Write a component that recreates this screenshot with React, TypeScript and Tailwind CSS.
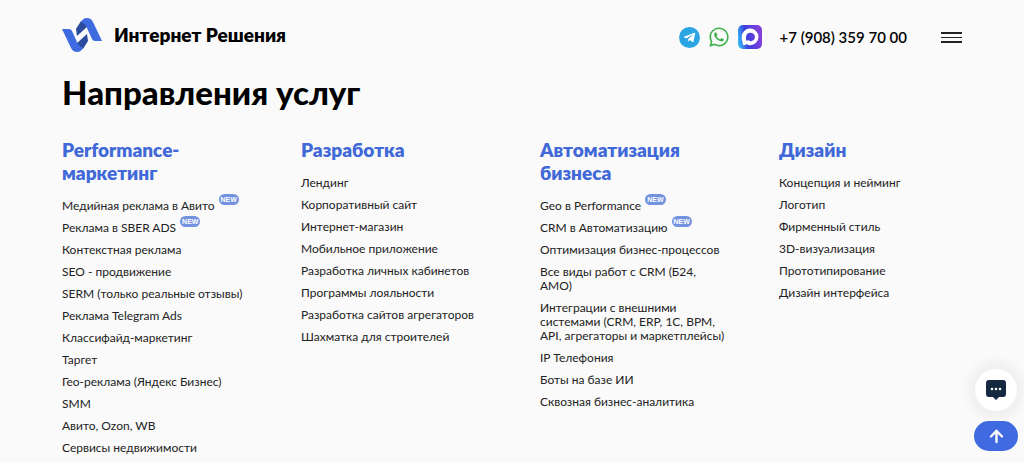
import { FaTelegramPlane, FaWhatsapp } from "react-icons/fa";
import { ArrowUp } from "lucide-react";

type Service = { name: string; isNew?: boolean };
type Column = { title: string; items: Service[] };

const columns: Column[] = [
  {
    title: "Performance-маркетинг",
    items: [
      { name: "Медийная реклама в Авито", isNew: true },
      { name: "Реклама в SBER ADS", isNew: true },
      { name: "Контекстная реклама" },
      { name: "SEO - продвижение" },
      { name: "SERM (только реальные отзывы)" },
      { name: "Реклама Telegram Ads" },
      { name: "Классифайд-маркетинг" },
      { name: "Таргет" },
      { name: "Гео-реклама (Яндекс Бизнес)" },
      { name: "SMM" },
      { name: "Авито, Ozon, WB" },
      { name: "Сервисы недвижимости" },
    ],
  },
  {
    title: "Разработка",
    items: [
      { name: "Лендинг" },
      { name: "Корпоративный сайт" },
      { name: "Интернет-магазин" },
      { name: "Мобильное приложение" },
      { name: "Разработка личных кабинетов" },
      { name: "Программы лояльности" },
      { name: "Разработка сайтов агрегаторов" },
      { name: "Шахматка для строителей" },
    ],
  },
  {
    title: "Автоматизация бизнеса",
    items: [
      { name: "Geo в Performance", isNew: true },
      { name: "CRM в Автоматизацию", isNew: true },
      { name: "Оптимизация бизнес-процессов" },
      { name: "Все виды работ с CRM (Б24, АМО)" },
      { name: "Интеграции с внешними системами (CRM, ERP, 1С, BPM, API, агрегаторы и маркетплейсы)" },
      { name: "IP Телефония" },
      { name: "Боты на базе ИИ" },
      { name: "Сквозная бизнес-аналитика" },
    ],
  },
  {
    title: "Дизайн",
    items: [
      { name: "Концепция и нейминг" },
      { name: "Логотип" },
      { name: "Фирменный стиль" },
      { name: "3D-визуализация" },
      { name: "Прототипирование" },
      { name: "Дизайн интерфейса" },
    ],
  },
];

function Logo() {
  return (
    <svg viewBox="0 0 40 34" className="h-[34px] w-10" aria-hidden="true">
      <path d="M14 11 L19 3 L26 8 L15 18 Z" fill="#2b4b9e" />
      <path d="M26 23 L21 31 L14 26 L25 16 Z" fill="#2b4b9e" />
      <path d="M0 11 H7 Q9 11 10 13 L15 24 Q17 29 21 30 Q19 34 15 34 Q11 34 9 30 Z" fill="#3f6be0" />
      <path d="M40 23 H33 Q31 23 30 21 L25 10 Q23 5 19 4 Q21 0 25 0 Q29 0 31 4 Z" fill="#3f6be0" />
    </svg>
  );
}

function MaxIcon() {
  return (
    <svg viewBox="0 0 24 24" className="size-6" aria-hidden="true">
      <defs>
        <linearGradient id="max-bg" x1="0" y1="0.6" x2="1" y2="0.4">
          <stop offset="0" stopColor="#35b8f5" />
          <stop offset="0.35" stopColor="#3a3fe0" />
          <stop offset="1" stopColor="#8a3fd8" />
        </linearGradient>
      </defs>
      <rect width="24" height="24" rx="5" fill="url(#max-bg)" />
      <path
        fill="#fff"
        fillRule="evenodd"
        d="M12.2 3.6a8.3 8.3 0 1 1 0 16.6c-1.500 0-2.400-.3-3.700-1.200-.8 1-3.500 1.800-3.600.5 0-1-.2-1.800-.5-2.700C4 15.500 3.700 14 3.700 12a8.400 8.400 0 0 1 8.500-8.400Zm.1 4.200a4.200 4.200 0 0 0-4.200 3.700c-.3 1.600.1 4.300.6 4.400.3.100.9-.4 1.300-.8a4.200 4.200 0 1 0 2.300-7.300Z"
      />
    </svg>
  );
}

function ServiceColumn({ title, items }: Column) {
  return (
    <section className="pr-[52px]">
      <h2 className="text-[19px] leading-[23px] font-extrabold text-[#4068d8]">{title}</h2>
      <ul className="mt-[15px] flex flex-col gap-2">
        {items.map((item) => (
          <li key={item.name} className="text-[12px] leading-[14px] text-[#222]">
            <a href="#">{item.name}</a>
            {item.isNew && (
              <sup className="top-0 ml-1 inline-block -translate-y-[5px] rounded-full bg-[#7393e0] px-[2px] align-top font-['Liberation_Sans',sans-serif] text-[7px] leading-[11px] font-bold text-white">
                NEW
              </sup>
            )}
          </li>
        ))}
      </ul>
    </section>
  );
}

export default function App() {
  return (
    <div className="min-h-screen bg-[#fafafa] font-['Lato','Noto_Sans',sans-serif]">
      <header className="flex items-center justify-between px-[62px] pt-[18px]">
        <a href="#" className="flex items-center gap-3">
          <Logo />
          <span className="text-[19px] leading-6 font-extrabold text-black">Интернет Решения</span>
        </a>
        <div className="flex items-center pt-1">
          <div className="flex items-center gap-2">
            <a href="#" aria-label="Telegram" className="flex size-[21px] items-center justify-center rounded-full bg-[#2ca5e4] text-white">
              <FaTelegramPlane size={13} />
            </a>
            <a href="#" aria-label="WhatsApp" className="text-[#3fb04c]">
              <FaWhatsapp size={22} />
            </a>
            <a href="#" aria-label="MAX">
              <MaxIcon />
            </a>
          </div>
          <a href="tel:+79083597000" className="ml-[18px] text-[15px] leading-6 font-semibold text-black">
            +7 (908) 359 70 00
          </a>
          <button type="button" aria-label="Меню" className="ml-[34px] flex w-[21px] flex-col gap-[3px]">
            <span className="h-[2px] w-full bg-[#222]" />
            <span className="h-px w-full bg-[#222]" />
            <span className="h-[2px] w-full bg-[#222]" />
          </button>
        </div>
      </header>

      <main className="px-[62px] pt-5">
        <h1 className="text-[33px] leading-10 font-black text-black">Направления услуг</h1>
        <div className="mt-[26px] -mr-14 grid grid-cols-4">
          {columns.map((column) => (
            <ServiceColumn key={column.title} {...column} />
          ))}
        </div>
      </main>

      <div className="fixed right-[6px] bottom-3 flex flex-col items-center gap-[10px]">
        <button
          type="button"
          aria-label="Открыть чат"
          className="flex size-[42px] items-center justify-center rounded-full bg-white shadow-[0_0_8px_8px_#f0f0f1]"
        >
          <svg viewBox="0 0 20 20" className="size-5" aria-hidden="true">
            <path d="M3 0h14a3 3 0 0 1 3 3v11a3 3 0 0 1-3 3h-4l-3 3-3-3H3a3 3 0 0 1-3-3V3a3 3 0 0 1 3-3Z" fill="#14283f" />
            <circle cx="6" cy="9" r="1.300" fill="#fff" />
            <circle cx="10" cy="9" r="1.300" fill="#fff" />
            <circle cx="14" cy="9" r="1.300" fill="#fff" />
          </svg>
        </button>
        <button
          type="button"
          aria-label="Наверх"
          className="flex h-[30px] w-11 items-center justify-center rounded-full bg-[#3f6ae0] text-white"
        >
          <ArrowUp size={19} strokeWidth={3} />
        </button>
      </div>
    </div>
  );
}
